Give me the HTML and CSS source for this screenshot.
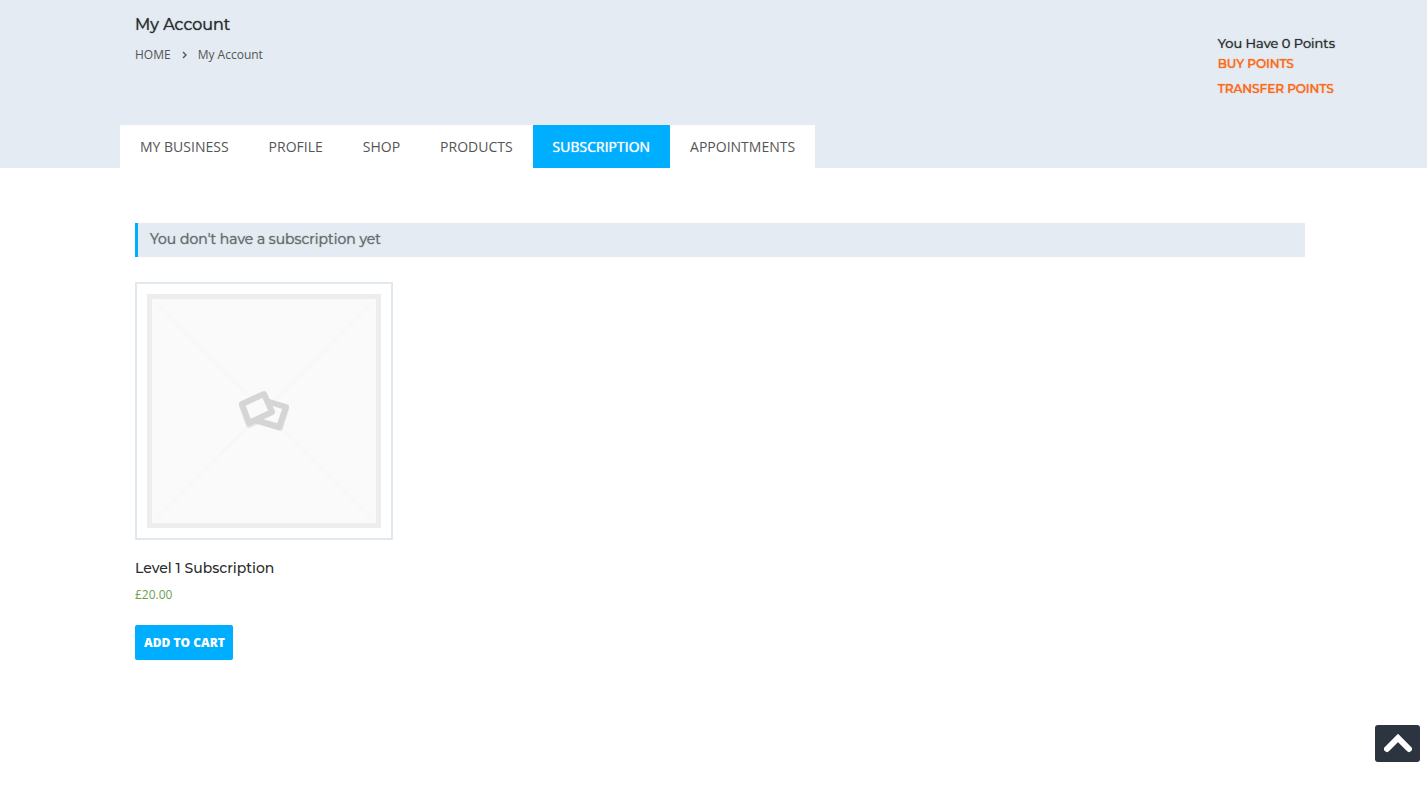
FILE: index.html
```
<!DOCTYPE html>
<html lang="en">
<head>
<meta charset="utf-8">
<meta name="viewport" content="width=device-width, initial-scale=1">
<title>My Account</title>
<link rel="stylesheet" href="styles.css">
</head>
<body>
<header class="page-header">
  <div class="header-row">
    <div class="heading">
      <h1 class="page-title">My Account</h1>
      <nav class="breadcrumb" aria-label="Breadcrumb">
        <a href="#">HOME</a>
        <svg class="crumb-arrow" viewBox="0 0 5 8" aria-hidden="true"><path d="M1 1l3 3-3 3"/></svg>
        <span>My Account</span>
      </nav>
    </div>
    <div class="points">
      <p class="points-count">You Have 0 Points</p>
      <a class="points-link" href="#">BUY POINTS</a>
      <a class="points-link" href="#">TRANSFER POINTS</a>
    </div>
  </div>
  <nav class="tabs" aria-label="Account">
    <a class="tab" href="#">MY BUSINESS</a>
    <a class="tab" href="#">PROFILE</a>
    <a class="tab" href="#">SHOP</a>
    <a class="tab" href="#">PRODUCTS</a>
    <a class="tab tab-active" href="#" aria-current="page">SUBSCRIPTION</a>
    <a class="tab" href="#">APPOINTMENTS</a>
  </nav>
</header>
<main class="content">
  <h2 class="notice">You don't have a subscription yet</h2>
  <article class="product">
    <a class="thumb" href="#" aria-label="Level 1 Subscription">
      <svg class="placeholder" viewBox="0 0 234 234" aria-hidden="true">
        <rect width="234" height="234" fill="#ededed"/>
        <rect x="5" y="5" width="224" height="224" fill="#fafafa"/>
        <path d="M8 8l218 218M226 8L8 226" stroke="#f7f7f7" stroke-width="2"/>
        <path class="photo-shadow" d="M95 112l23-10 8 18-24 11zM120 109l19 6-6 19-22-7z"/>
        <g class="photos">
          <path d="M119 107l20 6-7 20-21-6z"/>
          <path d="M95 110l22-10 8 18-23 11z"/>
        </g>
      </svg>
    </a>
    <h3 class="product-name">Level 1 Subscription</h3>
    <p class="price">£20.00</p>
    <button class="cart-button" type="button">ADD TO CART</button>
  </article>
</main>
<button class="to-top" type="button" aria-label="Back to top">
  <svg class="to-top-icon" viewBox="0 0 28 20" aria-hidden="true"><path d="M3 15L14 4l11 11"/></svg>
</button>
</body>
</html>
```
FILE: styles.css
```
* {
  box-sizing: border-box;
}

body {
  margin: 0;
  background: #fff;
  color: #555;
  font: 12px/20px "Open Sans", sans-serif;
}

h1, h2, h3, p {
  margin: 0;
}

a {
  color: inherit;
  text-decoration: none;
}

.page-title, .points, .notice, .product-name {
  font-family: Montserrat, Inter, sans-serif;
}

.page-title, .points, .notice, .tab-active {
  text-shadow: 0 0 1px currentColor;
}

.page-header {
  background: #e4ebf3;
}

.header-row {
  display: flex;
  justify-content: space-between;
  min-height: 125px;
  padding: 15px 92px 0 135px;
}

.page-title {
  color: #292b2d;
  font-size: 16px;
  font-weight: 400;
  line-height: 20px;
}

.breadcrumb {
  display: flex;
  align-items: center;
  gap: 11px;
  margin-top: 10px;
}

.crumb-arrow {
  width: 5px;
  height: 8px;
  fill: none;
  stroke: #555;
  stroke-width: 1.4;
}

.points {
  display: flex;
  flex-direction: column;
  gap: 5px;
  margin-top: 18px;
  font-size: 13px;
  font-weight: 400;
}

.points-count {
  margin-bottom: -4px;
  color: #292b2d;
}

.points-link {
  color: #fa6a1c;
  font-size: 12px;
  font-weight: 500;
}

.tabs {
  display: flex;
  width: fit-content;
  margin-left: 120px;
  background: #fff;
}

.tab {
  padding: 12px 20px 11px;
  font-size: 14px;
}

.tab-active {
  background: #00aeff;
  color: #fff;
  font-weight: 500;
}

.content {
  padding: 55px 122px 40px 135px;
}

.notice {
  padding: 6px 12px 8px;
  border-left: 3px solid #00aeff;
  background: #e4ebf3;
  color: #686a6b;
  font-size: 14px;
  font-weight: 400;
}

.product {
  width: 258px;
  margin-top: 25px;
}

.thumb {
  display: block;
  padding: 10px;
  border: 2px solid #e2e9ee;
}

.placeholder {
  display: block;
  width: 100%;
}

.photos {
  fill: #fafafa;
  stroke: #d5d5d5;
  stroke-width: 6;
  stroke-linejoin: round;
}

.photo-shadow {
  fill: none;
  stroke: #e6e6e6;
  stroke-width: 6;
  stroke-linejoin: round;
}

.product-name {
  margin-top: 18px;
  color: #292b2d;
  font-size: 14px;
  font-weight: 500;
}

.price {
  margin-top: 7px;
  color: #6b9f50;
  font-weight: 500;
}

.cart-button {
  margin-top: 20px;
  padding: 8px 8px 7px 9px;
  border: 0;
  border-radius: 2px;
  background: #00aeff;
  color: #fff;
  font: 800 12px/20px "Open Sans", sans-serif;
}

.to-top {
  position: fixed;
  right: 7px;
  bottom: 37px;
  display: grid;
  place-items: center;
  width: 45px;
  height: 37px;
  padding: 0;
  border: 0;
  border-radius: 3px;
  background: #2c353f;
}

.to-top-icon {
  width: 28px;
  height: 20px;
  fill: none;
  stroke: #fff;
  stroke-width: 6;
  stroke-linecap: round;
}
```
